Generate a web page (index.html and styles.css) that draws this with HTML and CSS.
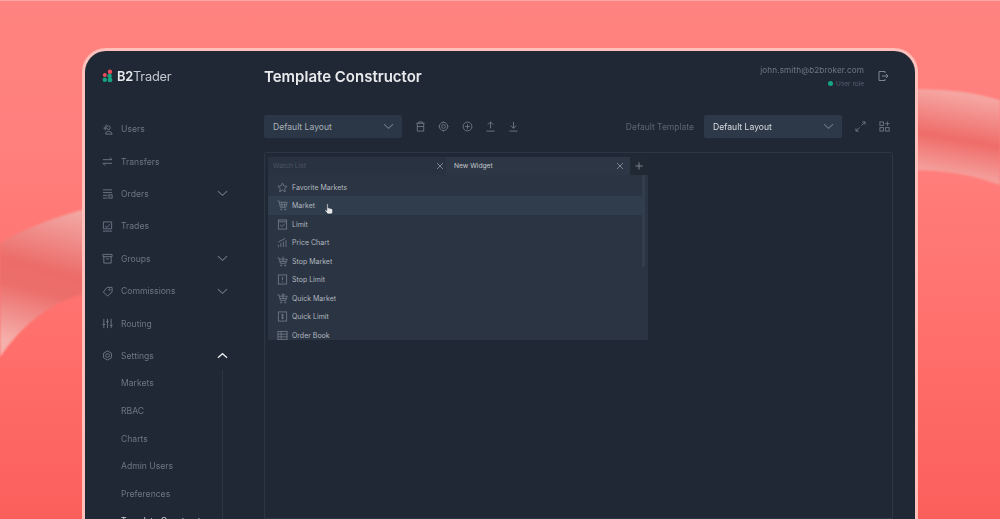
FILE: index.html
```html
<!DOCTYPE html>
<html lang="en">
<head>
<meta charset="utf-8">
<title>B2Trader – Template Constructor</title>
<link rel="stylesheet" href="styles.css">
</head>
<body>
<svg class="ribbons" width="1000" height="519" viewBox="0 0 1000 519" aria-hidden="true">
  <defs>
    <linearGradient id="rl" gradientUnits="userSpaceOnUse" x1="58" y1="205" x2="22" y2="345">
      <stop offset="0" stop-color="#f3aaa6"/><stop offset=".45" stop-color="#ec6c69"/><stop offset=".62" stop-color="#ec6f6c"/><stop offset="1" stop-color="#f6b0ac"/>
    </linearGradient>
    <linearGradient id="rr" gradientUnits="userSpaceOnUse" x1="965" y1="92" x2="950" y2="178">
      <stop offset="0" stop-color="#f6aaa6"/><stop offset=".55" stop-color="#ef6c69"/><stop offset="1" stop-color="#f5a5a1"/>
    </linearGradient>
  </defs>
  <path d="M0 243 Q40 220 90 208 L90 292 Q35 305 0 357 Z" fill="url(#rl)"/>
  <path d="M910 89 Q960 88 1000 100 L1000 185 Q960 170 910 170 Z" fill="url(#rr)"/>
</svg>

<div class="window">
  <aside class="sidebar">
    <div class="brand">
      <svg class="logo" width="14" height="14" viewBox="0 0 14 14"><circle cx="9" cy="2.800" r="2.200" fill="#ea4c5a"/><circle cx="3.800" cy="6" r="2" fill="#ea4c5a"/><circle cx="8.600" cy="7" r="2.300" fill="#16a37f"/><circle cx="3.800" cy="10.700" r="2.200" fill="#16a37f"/><circle cx="9" cy="10.900" r="2.400" fill="#16a37f"/></svg>
      <span class="brand-name"><b>B2</b>Trader</span>
    </div>
    <nav class="nav">
      <a class="nav-item"><svg class="ic" viewBox="0 0 12 12"><circle cx="7" cy="4" r="2"/><path d="M4 11c0-2 1-3 3-3s4 1 4 3zM3.500 7V3.500C3.500 2 4 1 5.500 1M1.500 4.500h3"/></svg><span>Users</span></a>
      <a class="nav-item"><svg class="ic" viewBox="0 0 12 12"><path d="M1 4h10M8.500 1.500 11 4M1 8h10M3.500 10.500 1 8"/></svg><span>Transfers</span></a>
      <a class="nav-item"><svg class="ic" viewBox="0 0 12 12"><path d="M1 2h10M1 5h10M1 8h5M1 11h5"/><rect x="7.500" y="7.500" width="3.500" height="3.500"/></svg><span>Orders</span><svg class="chev" viewBox="0 0 12 7"><path d="M1 1l5 4.500L11 1"/></svg></a>
      <a class="nav-item"><svg class="ic" viewBox="0 0 12 12"><path d="M1.500 1h9v7.500h-9zM1 11h10M3.500 5.500l2 1.500 3-3.500"/></svg><span>Trades</span></a>
      <a class="nav-item"><svg class="ic" viewBox="0 0 12 12"><path d="M1 1.500h10v2.500H1zM2 4v7h8V4M4.500 6.500h3"/></svg><span>Groups</span><svg class="chev" viewBox="0 0 12 7"><path d="M1 1l5 4.500L11 1"/></svg></a>
      <a class="nav-item"><svg class="ic" viewBox="0 0 12 12"><path d="M5.500 1.500H11v5L6 11 1.500 6.500z"/><circle cx="8.200" cy="4" r=".8"/></svg><span>Commissions</span><svg class="chev" viewBox="0 0 12 7"><path d="M1 1l5 4.500L11 1"/></svg></a>
      <a class="nav-item"><svg class="ic" viewBox="0 0 12 12"><path d="M2 1v10M6 1v10M10 1v10M.5 7h3M4.500 4h3M8.500 8h3"/></svg><span>Routing</span></a>
      <a class="nav-item"><svg class="ic" viewBox="0 0 12 12"><circle cx="6" cy="6" r="2"/><path d="M6 1l4.300 2.500v5L6 11 1.700 8.500v-5z"/></svg><span>Settings</span><svg class="chev chev-open" viewBox="0 0 12 7"><path d="M1 6l5-4.500L11 6"/></svg></a>
    </nav>
    <div class="subnav">
      <a class="sub-item">Markets</a>
      <a class="sub-item">RBAC</a>
      <a class="sub-item">Charts</a>
      <a class="sub-item">Admin Users</a>
      <a class="sub-item">Preferences</a>
      <a class="sub-item sub-active">Template Constructor</a>
    </div>
  </aside>

  <main class="main">
    <header class="header">
      <h1 class="title">Template Constructor</h1>
      <div class="user">
        <div class="email">john.smith@b2broker.com</div>
        <div class="role"><i class="dot"></i>User role</div>
      </div>
      <svg class="logout" viewBox="0 0 12 12"><path d="M8 3V1.500H2v9h6V9M5 6h6M9 4l2 2-2 2"/></svg>
    </header>

    <div class="toolbar">
      <div class="select"><span>Default Layout</span><svg class="chev" viewBox="0 0 12 7"><path d="M1 1l5 4.500L11 1"/></svg></div>
      <div class="tools">
        <svg class="ic" viewBox="0 0 12 12"><path d="M1.500 2.500h9M4 2.500V1h4v1.500M2.500 2.500V11h7V2.500M2.500 6h7"/></svg>
        <svg class="ic" viewBox="0 0 12 12"><circle cx="6" cy="6" r="4.500"/><circle cx="6" cy="6" r="2"/><path d="M6 .5v1M6 10.500v1M.5 6h1M10.500 6h1"/></svg>
        <svg class="ic" viewBox="0 0 12 12"><circle cx="6" cy="6" r="4.800"/><path d="M6 3.500v5M3.500 6h5"/></svg>
        <svg class="ic" viewBox="0 0 12 12"><path d="M6 8V1M3 4l3-3 3 3M1.500 11h9"/></svg>
        <svg class="ic" viewBox="0 0 12 12"><path d="M6 1v7M3 5l3 3 3-3M1.500 11h9"/></svg>
      </div>
      <div class="template">
        <span class="template-label">Default Template</span>
        <div class="select select-bright"><span>Default Layout</span><svg class="chev" viewBox="0 0 12 7"><path d="M1 1l5 4.500L11 1"/></svg></div>
        <div class="tools-right">
          <svg class="ic" viewBox="0 0 12 12"><path d="M7 5l4-4M8 1h3v3M5 7l-4 4M1 8v3h3"/></svg>
          <svg class="ic" viewBox="0 0 12 12"><rect x="1" y="1" width="3.800" height="3.800"/><rect x="1" y="7.200" width="3.800" height="3.800"/><rect x="7.200" y="7.200" width="3.800" height="3.800"/><path d="M9.100 .5v4.800M6.700 2.900h4.800"/></svg>
        </div>
      </div>
    </div>

    <section class="panel">
      <div class="widget">
        <div class="tabs">
          <div class="tab tab-dim"><span>Watch List</span><svg class="x" viewBox="0 0 8 8"><path d="M1 1l6 6M7 1L1 7"/></svg></div>
          <div class="tab tab-on"><span>New Widget</span><svg class="x" viewBox="0 0 8 8"><path d="M1 1l6 6M7 1L1 7"/></svg></div>
          <div class="tab-add"><svg class="x" viewBox="0 0 8 8"><path d="M4 .5v7M.5 4h7"/></svg></div>
        </div>
        <ul class="list">
          <li class="row"><svg class="ic" viewBox="0 0 12 12"><path d="M6 1l1.500 3.300 3.500.4-2.600 2.400.7 3.600L6 8.900l-3.100 1.800.7-3.600L1 4.700l3.500-.4z"/></svg>Favorite Markets</li>
          <li class="row row-hover"><svg class="ic" viewBox="0 0 12 12"><path d="M.5 1h1.700l1.500 7h6l1.500-5.500H2.600M5 2.500 5.500 8M8.500 2.500 8 8M3 5.200h7.800"/><circle cx="4.500" cy="10.300" r=".7"/><circle cx="9" cy="10.300" r=".7"/></svg>Market</li>
          <li class="row"><svg class="ic" viewBox="0 0 12 12"><rect x="1.500" y="1" width="9" height="10"/><path d="M1.500 3h9M3.500 6.500l2 1.800 3-3.300"/></svg>Limit</li>
          <li class="row"><svg class="ic" viewBox="0 0 12 12"><path d="M1.500 11V8.500M4.200 11V6.500M7 11V5M9.800 11V3.500M1.500 5.500 9 1.500"/></svg>Price Chart</li>
          <li class="row"><svg class="ic" viewBox="0 0 12 12"><path d="M.5 2h1.700l1.500 6h6l1.500-4.500H2.600M6.700 .5v5M3 6h7.500"/><circle cx="4.500" cy="10.300" r=".7"/><circle cx="9" cy="10.300" r=".7"/></svg>Stop Market</li>
          <li class="row"><svg class="ic" viewBox="0 0 12 12"><rect x="1.500" y="1" width="9" height="10"/><path d="M6 3v3.500M6 8v1"/></svg>Stop Limit</li>
          <li class="row"><svg class="ic" viewBox="0 0 12 12"><path d="M.5 2h1.700l1.500 6h6l1.500-4.500H2.600M6.700 .5v5M5 2h3.400M3 6h7.500"/><circle cx="4.500" cy="10.300" r=".7"/><circle cx="9" cy="10.300" r=".7"/></svg>Quick Market</li>
          <li class="row"><svg class="ic" viewBox="0 0 12 12"><rect x="1.500" y="1" width="9" height="10"/><path d="M6 3v6M4.500 4.500h3M4.500 7.500h3"/></svg>Quick Limit</li>
          <li class="row"><svg class="ic" viewBox="0 0 12 12"><rect x="1" y="1.500" width="10" height="9"/><path d="M1 4.500h10M1 7.500h10M4.500 1.500v9"/></svg>Order Book</li>
        </ul>
        <div class="thumb"></div>
        <svg class="cursor" width="10" height="12" viewBox="0 0 10 12"><path d="M3 .8c.6-.4 1.200 0 1.200.7v3.300l3 .7c1 .3 1.500.8 1.500 1.800v1.700c0 1-.8 2-2 2H4.500c-.7 0-1.200-.3-1.600-.9L1 7.700c-.3-.6.400-1.200 1-.8l.8.7V1.500c0-.3 0-.5.200-.7z" fill="#e6e8ea" stroke="#1f2733" stroke-width=".6"/></svg>
      </div>
    </section>
  </main>
</div>
</body>
</html>
```

FILE: styles.css
```css
* { box-sizing: border-box; }

html, body {
  margin: 0;
  height: 519px;
  overflow: hidden;
}

body {
  position: relative;
  font-family: Inter, "Liberation Sans", sans-serif;
  background: linear-gradient(180deg, #ff8380 0%, #ff7f7d 30%, #ff6f6b 65%, #fb5f5c 100%);
  border-top: 1px solid #ffa9a6;
  padding: 47px 82px 0;
}

.ribbons {
  position: absolute;
  left: 0;
  top: -1px;
  filter: blur(1px);
}

.window {
  position: relative;
  height: 471px;
  display: flex;
  background: #202836;
  border: 3px solid #ffc0bb;
  border-bottom: 0;
  border-radius: 24px 24px 0 0;
  overflow: hidden;
  filter: blur(.3px);
}

svg { fill: none; flex: none; }

.ic {
  width: 11px;
  height: 11px;
  stroke: #6f7885;
  stroke-width: 1;
}

.chev {
  width: 11px;
  height: 7px;
  stroke: #6f7885;
  stroke-width: 1.1;
}

.chev-open { stroke: #e8eaec; stroke-width: 1.4; }

/* sidebar */
.sidebar {
  width: 179px;
  flex: none;
  display: flex;
  flex-direction: column;
}

.brand {
  height: 50px;
  flex: none;
  padding-left: 16px;
  display: flex;
  align-items: center;
  gap: 2px;
}

.brand-name {
  font-size: 12.800px;
  letter-spacing: -.2px;
  color: #c5cad0;
}

.brand-name b { font-weight: 600; color: #e8eaec; }

.nav {
  margin-top: 12px;
  flex: none;
  display: flex;
  flex-direction: column;
}

.nav-item {
  height: 32.400px;
  flex: none;
  padding: 0 36px 0 17px;
  display: flex;
  align-items: center;
  gap: 8px;
  font-size: 8.600px;
  color: #6d7683;
}

.nav-item span { flex: 1; }

.subnav {
  margin: -2.500px 41px 0 0;
  padding-left: 36px;
  border-right: 1px solid #2d3744;
  flex: none;
  display: flex;
  flex-direction: column;
}

.sub-item {
  height: 27.600px;
  flex: none;
  display: flex;
  align-items: center;
  font-size: 8.600px;
  color: #6d7683;
}

.sub-active { color: #d6d9dd; }

/* main */
.main {
  flex: 1;
  min-width: 0;
  padding-right: 22px;
  display: flex;
  flex-direction: column;
}

.header {
  height: 50px;
  flex: none;
  display: flex;
  align-items: center;
}

.title {
  margin: 0;
  flex: 1;
  font-size: 15px;
  font-weight: 600;
  color: #e8eaec;
}

.user {
  text-align: right;
  font-size: 8.200px;
  color: #6f7885;
}

.email { letter-spacing: .1px; }

.role {
  margin-top: 5px;
  font-size: 6.500px;
  display: flex;
  align-items: center;
  justify-content: flex-end;
  gap: 3px;
  color: #566070;
}

.dot {
  width: 5px;
  height: 5px;
  border-radius: 50%;
  background: #14a583;
}

.logout {
  width: 12px;
  height: 12px;
  margin: 0 4px 0 13px;
  stroke: #7d8692;
  stroke-width: 1;
}

.toolbar {
  margin-top: 14px;
  height: 23px;
  flex: none;
  display: flex;
  align-items: center;
}

.select {
  width: 138px;
  height: 23px;
  padding: 0 8px 0 9px;
  background: #2b3746;
  border-radius: 2px;
  display: flex;
  align-items: center;
  justify-content: space-between;
  font-size: 8.600px;
  color: #a9afb7;
}

.select-bright { color: #d9dce0; background: #2d3948; }

.tools {
  margin-left: 13px;
  display: flex;
  gap: 12.300px;
}

.template {
  margin-left: auto;
  display: flex;
  align-items: center;
}

.template-label {
  font-size: 8.500px;
  color: #5c6572;
  margin-right: 10px;
}

.tools-right {
  margin: 0 3px 0 13px;
  display: flex;
  gap: 13px;
}

/* panel */
.panel {
  margin-top: 14px;
  flex: 1;
  padding: 4px 3px;
  border: 1px solid #2c3744;
  border-radius: 2px 2px 0 0;
}

.widget {
  position: relative;
  width: 380px;
  opacity: .99;
}

.tabs {
  height: 18px;
  display: flex;
}

.tab {
  display: flex;
  align-items: center;
  justify-content: space-between;
  font-size: 6.700px;
  padding-bottom: 1px;
}

.tab-dim {
  width: 178px;
  padding-left: 5px;
  padding-right: 2px;
  background: #2a3341;
  color: #4d5764;
}

.tab-on {
  width: 184px;
  padding-left: 8px;
  padding-right: 6px;
  background: #2d3745;
  color: #c9cdd2;
}

.tab-add {
  width: 18px;
  background: #222a36;
  display: flex;
  align-items: center;
  justify-content: center;
}

.x {
  width: 8px;
  height: 8px;
  stroke: #7d8692;
  stroke-width: 1;
}

.list {
  list-style: none;
  margin: 0;
  padding: 3px 0 0;
  height: 165px;
  overflow: hidden;
  background: #2b3543;
}

.row {
  height: 18px;
  padding-left: 9px;
  display: flex;
  align-items: center;
  gap: 4px;
  font-size: 7px;
  color: #b4bac2;
}

.row:nth-child(even) { height: 19px; }

.row-hover { background: #303e4d; margin-right: 6px; }

.thumb {
  position: absolute;
  right: 3px;
  top: 18px;
  width: 3px;
  height: 92px;
  background: #343f4d;
}

.cursor {
  position: absolute;
  left: 56px;
  top: 46px;
}
```
